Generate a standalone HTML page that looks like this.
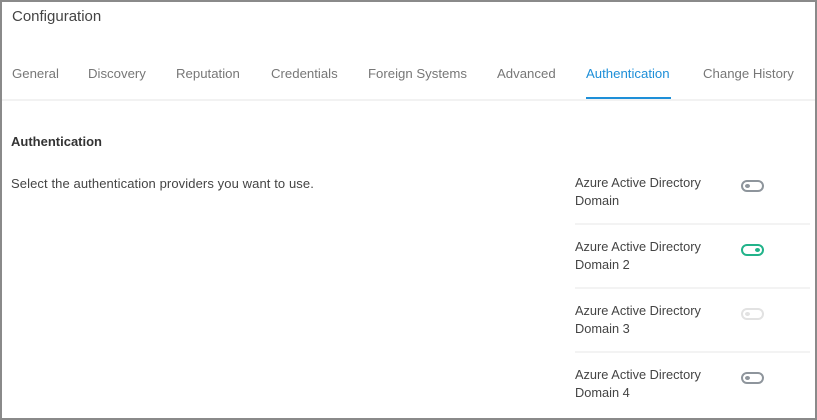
<!DOCTYPE html>
<html><head><style>
*{margin:0;padding:0;box-sizing:border-box}
body{width:817px;height:420px;overflow:hidden;background:#fff;font-family:"Liberation Sans",sans-serif;position:relative}
.frame{position:absolute;left:0;top:0;width:817px;height:420px;border:2px solid #8a8a8a}
.t{position:absolute;white-space:nowrap}
.title{left:12px;top:8px;font-size:15px;color:#444}
.tab{top:66px;font-size:13.2px;color:#777}
.act{color:#1e8fd8}
.ul{position:absolute;left:586px;top:97px;width:85px;height:2px;background:#1e8fd8}
.hr{position:absolute;left:2px;top:99px;width:813px;height:2px;background:#f2f2f2}
.h{left:11px;top:134px;font-size:13px;font-weight:bold;color:#333}
.d{left:11px;top:176px;font-size:13px;color:#444;letter-spacing:0.1px}
.it{left:575px;font-size:12.8px;color:#444;line-height:18px}
.sep{position:absolute;left:575px;width:235px;height:2px;background:#f3f3f3}
.tg{position:absolute;left:741px;width:23px;height:12px;border:2px solid #8e959c;border-radius:6px}
.tg i{position:absolute;left:2px;top:2px;width:5px;height:4px;border-radius:50%;background:#8e959c}
.tg.on{border-color:#22b38a}.tg.on i{left:auto;right:2px;background:#22b38a}
.tg.dis{border-color:#e2e2e2}.tg.dis i{background:#e2e2e2}
</style></head><body>
<div class="t title">Configuration</div>
<div class="t tab" style="left:12px">General</div>
<div class="t tab" style="left:88px">Discovery</div>
<div class="t tab" style="left:176px">Reputation</div>
<div class="t tab" style="left:271px">Credentials</div>
<div class="t tab" style="left:368px">Foreign Systems</div>
<div class="t tab" style="left:497px">Advanced</div>
<div class="t tab act" style="left:586px">Authentication</div>
<div class="t tab" style="left:703px">Change History</div>
<div class="hr"></div><div class="ul"></div>
<div class="t h">Authentication</div>
<div class="t d">Select the authentication providers you want to use.</div>
<div class="t it" style="top:174px">Azure Active Directory<br>Domain</div>
<div class="tg" style="top:180px"><i></i></div>
<div class="sep" style="top:223px"></div>
<div class="t it" style="top:238px">Azure Active Directory<br>Domain 2</div>
<div class="tg on" style="top:244px"><i></i></div>
<div class="sep" style="top:287px"></div>
<div class="t it" style="top:302px">Azure Active Directory<br>Domain 3</div>
<div class="tg dis" style="top:308px"><i></i></div>
<div class="sep" style="top:351px"></div>
<div class="t it" style="top:366px">Azure Active Directory<br>Domain 4</div>
<div class="tg" style="top:372px"><i></i></div>
<div class="frame"></div>
</body></html>
